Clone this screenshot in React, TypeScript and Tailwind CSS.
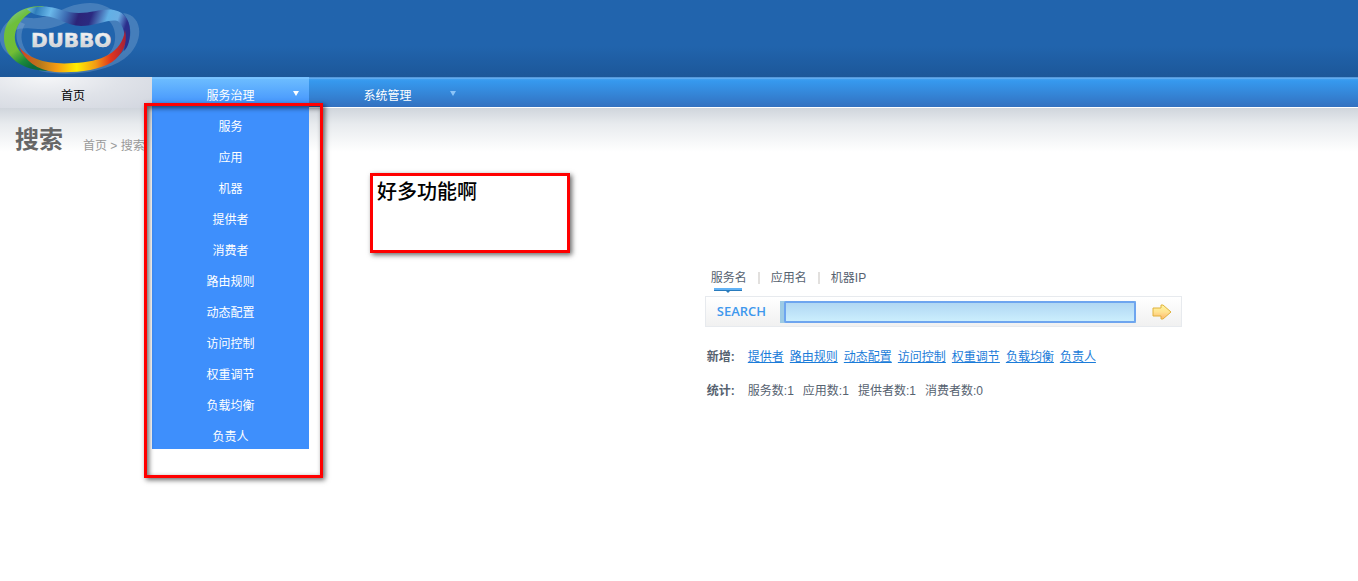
import { useState } from "react";

const menuItems = [
  "服务",
  "应用",
  "机器",
  "提供者",
  "消费者",
  "路由规则",
  "动态配置",
  "访问控制",
  "权重调节",
  "负载均衡",
  "负责人",
];

const createLinks = [
  "提供者",
  "路由规则",
  "动态配置",
  "访问控制",
  "权重调节",
  "负载均衡",
  "负责人",
];

const stats = [
  { label: "服务数", value: 1 },
  { label: "应用数", value: 1 },
  { label: "提供者数", value: 1 },
  { label: "消费者数", value: 0 },
];

const searchTabs = ["服务名", "应用名", "机器IP"];

const Logo = () => {
  return (
    <svg width="142" height="76" viewBox="0 0 142 76" role="img" aria-label="DUBBO">
      <defs>
        <linearGradient id="green" x1="0" y1="0" x2="0.5" y2="1">
          <stop offset="0" stopColor="#8ccbc0" />
          <stop offset="0.3" stopColor="#6ebf3c" />
          <stop offset="0.65" stopColor="#72bd35" />
          <stop offset="0.85" stopColor="#1c8a3a" />
          <stop offset="1" stopColor="#0b6b3c" />
        </linearGradient>
        <linearGradient id="blue" x1="0" y1="0" x2="1" y2="0.15">
          <stop offset="0" stopColor="#7cc7d8" />
          <stop offset="0.1" stopColor="#2f7dbb" />
          <stop offset="0.24" stopColor="#6ab8ea" />
          <stop offset="0.4" stopColor="#3c6bb2" />
          <stop offset="0.52" stopColor="#2c2478" />
          <stop offset="0.64" stopColor="#2b2a80" />
          <stop offset="0.8" stopColor="#62b0e6" />
          <stop offset="0.9" stopColor="#6aaee4" />
          <stop offset="1" stopColor="#2b2f8c" />
        </linearGradient>
        <linearGradient id="warm" x1="0" y1="0" x2="1" y2="0">
          <stop offset="0" stopColor="#d8401f" />
          <stop offset="0.2" stopColor="#b87a1c" />
          <stop offset="0.35" stopColor="#f59a12" />
          <stop offset="0.54" stopColor="#ffee00" />
          <stop offset="0.72" stopColor="#f39a14" />
          <stop offset="0.86" stopColor="#e0351c" />
          <stop offset="1" stopColor="#a52238" />
        </linearGradient>
        <linearGradient id="silver" x1="0" y1="0" x2="0" y2="1">
          <stop offset="0" stopColor="#ffffff" />
          <stop offset="1" stopColor="#c4c6ca" />
        </linearGradient>
      </defs>
      {/* faint rings behind the ribbon */}
      <g fill="#a5c3dd" fillOpacity="0.28" fillRule="evenodd">
        <path d="M0 34C4 20 16 16 30 18C52 20 64 3 90 3C112 3 126 20 126 36C126 50 116 60 106 63L101 60C112 54 116 44 115 34C114 23 106 16 96 14C76 13 60 31 38 29C18 27 13 28 10 40C10 50 24 60 38 66C18 64-3 52 0 34Z" />
        <path d="M123 13C144 15 145 44 124 59C104 73 66 77 40 71L34 65C60 72 100 70 118 56C133 45 134 26 123 13Z" />
        <path d="M25 24C17 38 23 54 41 63L32 59C16 50 13 34 20 22Z" />
      </g>
      <path
        fill="url(#green)"
        d="M45 6 C20 5 4 18 4 38 C4 57 22 71 49 71 C36 66 17 55 15 40 C14 25 25 12 45 6Z"
      />
      <path
        fill="url(#blue)"
        d="M27 9C33 7 42 6 49 7C59 8 66 13 79 13C93 13 103 8 114 10C126 12 131 23 130 35C129 43 128 47 124 51C126 39 125 28 119 22C113 17 97 26 81 26C67 26 58 17 45 16C38 16 32 14 27 9Z"
      />
      <path
        fill="url(#warm)"
        d="M19 47 C29 59 47 65 74 63 C101 62 122 53 125 30 C128 44 123 54 112 62 C98 71 75 73 55 72 C37 70 25 61 19 47Z"
      />
      <text
        x="31"
        y="47"
        fontSize="20"
        fontWeight="700"
        fontFamily="'DejaVu Sans', sans-serif"
        fill="url(#silver)"
        stroke="#dfe1e5"
        strokeWidth="0.6"
      >
        DUBBO
      </text>
    </svg>
  );
};

const Caret = ({ className }: { className: string }) => {
  return (
    <svg width="6" height="5" viewBox="0 0 6 5" className={className} aria-hidden="true">
      <path d="M0 0h6L3 5z" fill="currentColor" />
    </svg>
  );
};

const Nav = () => {
  return (
    <nav className="flex h-[31px] border-b border-white bg-[linear-gradient(#2878c4,#80b8f0_1px,#419ff0_2px,#3699ee_4px,#3371c0)] text-xs text-white">
      <a
        href="#home"
        className="flex h-[31px] w-[152px] justify-center bg-[radial-gradient(ellipse_at_30%_0%,#f5f6f8,#e0e3e9_50%,#d2d6df)] pt-[9px] pr-1.5 leading-5 text-black"
      >
        首页
      </a>
      <div className="relative w-[157px]">
        <button
          type="button"
          aria-expanded="true"
          className="flex h-[31px] w-full items-start justify-center bg-[linear-gradient(#64b5ff,#8accff_1px,#6cbcff_2px,#3e8ffc)] pt-[9px] leading-5"
        >
          服务治理
          <Caret className="absolute top-3.5 right-2.5" />
        </button>
        <ul className="absolute top-[31px] left-0 w-full bg-[#3e8ffc] text-center">
          {menuItems.map((item) => (
            <li key={item}>
              <a href="#menu" className="block h-[31px] pt-[9px] leading-5">
                {item}
              </a>
            </li>
          ))}
        </ul>
      </div>
      <button type="button" className="relative flex w-[157px] items-start justify-center pt-[9px] leading-5">
        系统管理
        <Caret className="absolute top-3.5 right-2.5 text-[#8bc4f8]" />
      </button>
    </nav>
  );
};

const SearchPanel = () => {
  const [keyword, setKeyword] = useState("");

  return (
    <section className="ml-[51.9%] w-[477px] pt-[110px] text-xs text-[#566270]">
      <div className="flex h-[28px] items-start pl-1.5">
        {searchTabs.map((tab, i) => (
          <div key={tab} className="flex items-start">
            {i > 0 && <span className="mx-[11px] mt-1 h-3 w-0.5 bg-[#e2e0de]" />}
            <button type="button" className="flex flex-col items-center leading-5">
              {tab}
              {i === 0 && (
                <svg width="28" height="5" viewBox="0 0 28 5" className="-ml-0.5" aria-hidden="true">
                  <path d="M0 0h28v2H0z" fill="#62b2f5" />
                  <path d="M0 2h28v1H16l-2 2-2-2H0z" fill="#287bbd" />
                </svg>
              )}
            </button>
          </div>
        ))}
      </div>

      <form
        onSubmit={(e) => e.preventDefault()}
        className="flex h-[31px] items-center border border-[#e7eaee] bg-linear-to-b from-white to-[#f1f1f1]"
      >
        <label
          htmlFor="keyword"
          className="w-[74px] pl-[11px] font-['Open_Sans',sans-serif] text-[13px] font-semibold text-[#3f98ed]"
        >
          SEARCH
        </label>
        <div className="h-[22px] flex-1 bg-[#9dcbe5] pl-1">
          <input
            id="keyword"
            value={keyword}
            onChange={(e) => setKeyword(e.target.value)}
            className="block h-[22px] w-full rounded-xs border-2 border-[#6ea5ef] bg-linear-to-b from-[#b0d7f3] to-[#cbeefd] px-1 outline-none"
          />
        </div>
        <button type="submit" aria-label="搜索" className="flex w-[45px] justify-center pl-2">
          <svg width="20" height="16" viewBox="0 0 20 16" aria-hidden="true">
            <defs>
              <linearGradient id="arrow" x1="0" y1="0" x2="0" y2="1">
                <stop offset="0" stopColor="#fff5a0" />
                <stop offset="0.5" stopColor="#ffe391" />
                <stop offset="1" stopColor="#ffb66e" />
              </linearGradient>
            </defs>
            <path d="M1 4h8V1h2l8 7-8 7H9v-3H1z" fill="url(#arrow)" stroke="#e0b23c" />
          </svg>
        </button>
      </form>

      <dl className="grid grid-cols-[41px_1fr] gap-y-3.5 pt-5 pl-0.5 leading-5">
        <dt className="font-bold">新增:</dt>
        <dd className="flex gap-1.5">
          {createLinks.map((link) => (
            <a key={link} href="#create" className="text-[#1b7cd9] underline">
              {link}
            </a>
          ))}
        </dd>
        <dt className="font-bold">统计:</dt>
        <dd className="flex gap-[9px]">
          {stats.map(({ label, value }) => (
            <span key={label}>
              {label}:{value}
            </span>
          ))}
        </dd>
      </dl>
    </section>
  );
};

const App = () => {
  return (
    <div className="relative min-h-screen bg-white font-['Liberation_Sans','Noto_Sans_CJK_SC',sans-serif]">
      <header className="h-[77px] bg-linear-to-b from-[#2164ad] from-60% to-[#1c5799]">
        <Logo />
      </header>

      <Nav />

      <main className="bg-[linear-gradient(#d0d5dc,#e8ebee_16px,#ffffff_44px)]">
        <div className="flex h-[50px] items-end gap-5 pl-[15px] text-[#999999]">
          <h1 className="text-2xl leading-9 font-bold text-[#666666]">搜索</h1>
          <p className="text-xs leading-6">首页 &gt; 搜索</p>
        </div>
        <SearchPanel />
      </main>

      {/* callouts drawn on top of the page */}
      <div className="pointer-events-none absolute top-[103px] left-[144px] h-[375px] w-[179px] border-3 border-[#ff0000] shadow-[2px_2px_5px_#00000099,inset_2px_2px_5px_#00000099]" />
      <div className="absolute top-[173px] left-[370px] h-[80px] w-[200px] border-3 border-[#ff0000] bg-white px-1 text-xl leading-8 font-medium text-black shadow-[2px_2px_5px_#00000099]">
        好多功能啊
      </div>
    </div>
  );
};

export default App;
